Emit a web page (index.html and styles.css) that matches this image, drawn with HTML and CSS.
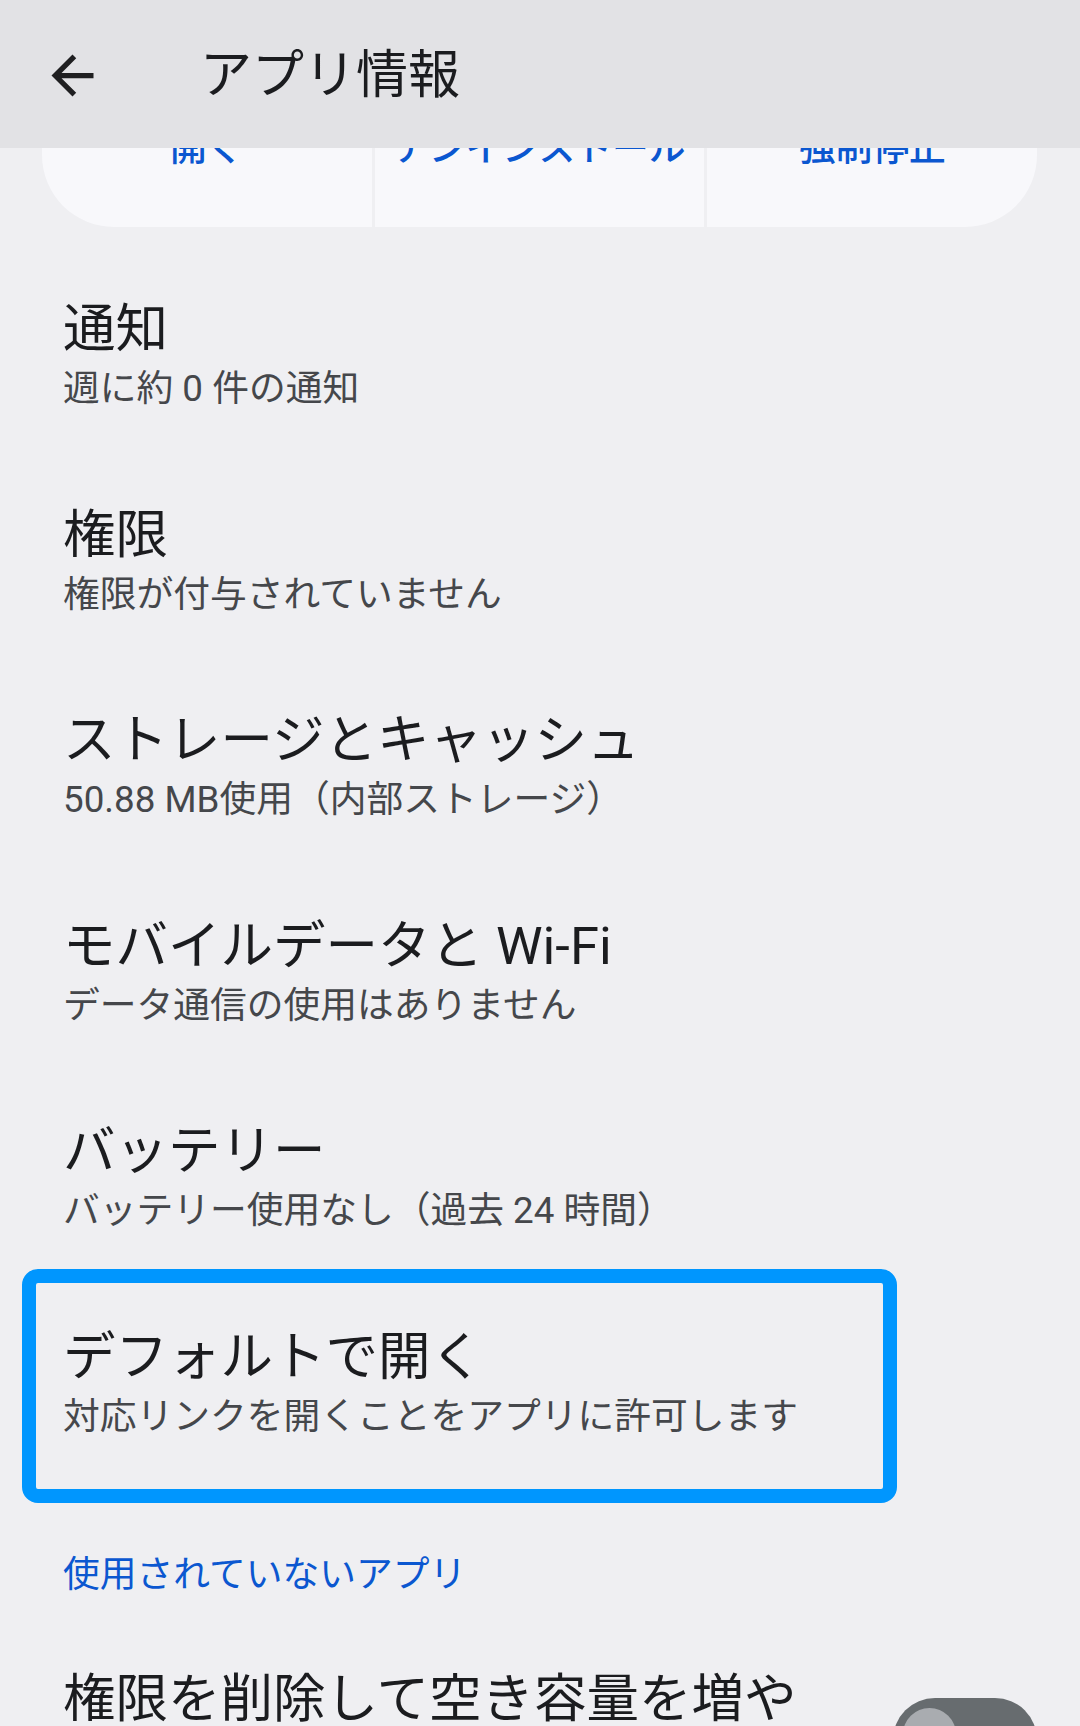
FILE: index.html
```html
<!DOCTYPE html>
<html lang="ja">
<head>
<meta charset="utf-8">
<title>アプリ情報</title>
<link rel="stylesheet" href="styles.css">
</head>
<body>
<header class="appbar">
  <svg class="back" viewBox="0 0 24 24" aria-hidden="true"><path d="M20 11H7.83l5.59-5.59L12 4l-8 8 8 8 1.41-1.41L7.83 13H20v-2z"/></svg>
  <h1 class="appbar-title">アプリ情報</h1>
</header>
<main class="content">
  <div class="actions">
    <div class="action"><span class="action-label">開く</span></div>
    <div class="action"><span class="action-label">アンインストール</span></div>
    <div class="action"><span class="action-label">強制停止</span></div>
  </div>
  <ul class="prefs">
    <li class="pref"><div class="pref-title">通知</div><div class="pref-summary">週に約 0 件の通知</div></li>
    <li class="pref"><div class="pref-title">権限</div><div class="pref-summary">権限が付与されていません</div></li>
    <li class="pref"><div class="pref-title">ストレージとキャッシュ</div><div class="pref-summary">50.88 MB使用（内部ストレージ）</div></li>
    <li class="pref"><div class="pref-title">モバイルデータと Wi-Fi</div><div class="pref-summary">データ通信の使用はありません</div></li>
    <li class="pref"><div class="pref-title">バッテリー</div><div class="pref-summary">バッテリー使用なし（過去 24 時間）</div></li>
    <li class="pref pref-focused"><div class="pref-title">デフォルトで開く</div><div class="pref-summary">対応リンクを開くことをアプリに許可します</div></li>
  </ul>
  <div class="category">使用されていないアプリ</div>
  <div class="pref pref-switch">
    <div class="pref-text"><div class="pref-title">権限を削除して空き容量を増やす</div></div>
    <div class="switch"><div class="thumb"></div></div>
  </div>
</main>
</body>
</html>
```
FILE: styles.css
```css
html, body {
  margin: 0;
  padding: 0;
}
body {
  width: 1080px;
  height: 1726px;
  overflow: hidden;
  background: #efeff2;
  font-family: Roboto, "Noto Sans CJK JP", sans-serif;
  color: #1b1c1f;
}
.appbar {
  position: fixed;
  top: 0;
  left: 0;
  right: 0;
  height: 148px;
  background: #e2e2e5;
  z-index: 2;
  display: flex;
  align-items: center;
  box-sizing: border-box;
  padding-top: 3px;
}
.back {
  width: 63px;
  height: 63px;
  margin-left: 41px;
  fill: #1f1f21;
  flex: none;
}
.appbar-title {
  margin: 0 0 0 96px;
  font-size: 52px;
  font-weight: 400;
  line-height: 68px;
  color: #1b1c1f;
}
.content {
  display: flex;
  flex-direction: column;
}
.actions {
  margin: 0 43px 0 42px;
  display: grid;
  grid-template-columns: 1fr 1fr 1fr;
  gap: 3px;
  border-radius: 72px;
  overflow: hidden;
}
.action {
  background: #f8f8fb;
  padding: 125px 0 54px;
  text-align: center;
}
.action-label {
  font-size: 36.75px;
  line-height: 48px;
  font-weight: 500;
  color: #0b57d0;
}
.prefs {
  list-style: none;
  margin: 24px 0 0;
  padding: 0;
}
.pref {
  position: relative;
  padding: 44px 63px 43.5px 63px;
}
.pref-title {
  font-size: 52.5px;
  line-height: 68px;
  color: #1b1c1f;
}
.pref-summary {
  margin-top: 2px;
  font-size: 36.75px;
  line-height: 48px;
  color: #45474b;
}
.pref-focused::after {
  content: "";
  position: absolute;
  top: -10px;
  bottom: -19px;
  left: 22px;
  width: 875px;
  box-sizing: border-box;
  border: 14px solid #0096fe;
  border-radius: 16px;
}
.category {
  margin: 67px 63px 0;
  font-size: 36.75px;
  line-height: 48px;
  color: #0b57d0;
}
.pref-switch {
  margin-top: 22px;
  display: flex;
  align-items: flex-start;
  padding-right: 43px;
}
.pref-text {
  flex: 1;
  min-width: 0;
}
.switch {
  flex: none;
  margin-left: 49px;
  margin-top: 33px;
  width: 144px;
  height: 84px;
  box-sizing: border-box;
  padding: 10px;
  border-radius: 42px;
  background: #676c6f;
}
.thumb {
  width: 53px;
  height: 53px;
  border-radius: 50%;
  background: #a9acb0;
}
```
